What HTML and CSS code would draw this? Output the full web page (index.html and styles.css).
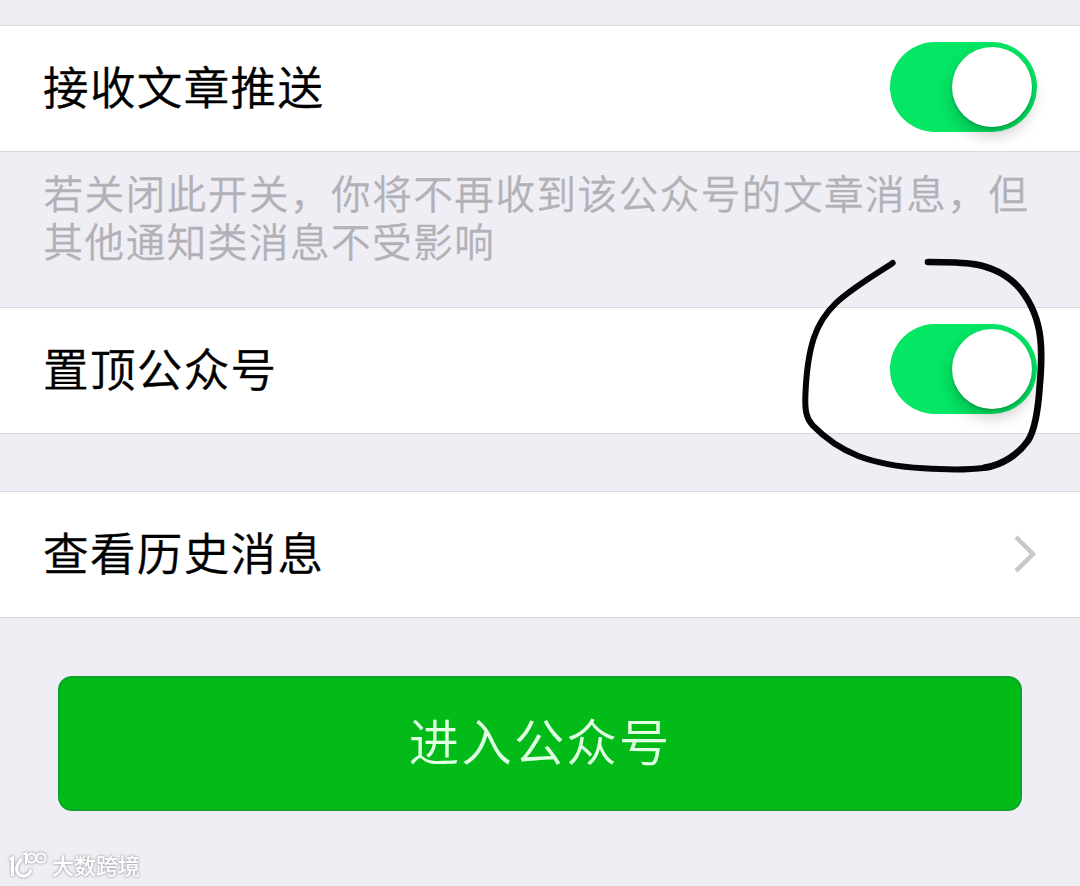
FILE: index.html
```html
<!DOCTYPE html>
<html lang="zh-CN">
<head>
    <meta charset="UTF-8">
    <meta name="viewport" content="width=device-width, initial-scale=1.0">
    <title>公众号设置</title>
    <link rel="stylesheet" href="styles.css">
</head>
<body>

<div class="settings">
    <div class="row">
        <span class="label">接收文章推送</span>
        <div class="switch"><div class="knob"></div></div>
    </div>
    <p class="hint">若关闭此开关，你将不再收到该公众号的文章消息，但其他通知类消息不受影响</p>

    <div class="row">
        <span class="label">置顶公众号</span>
        <div class="switch"><div class="knob"></div></div>
    </div>

    <div class="row row-link">
        <span class="label">查看历史消息</span>
        <svg class="arrow" width="24" height="40" viewBox="0 0 24 40">
            <path d="M3 3 L20 20 L3 37" />
        </svg>
    </div>

    <button class="enter">进入公众号</button>
</div>

<!-- Cercle dessiné à la main -->
<svg class="circle" viewBox="0 0 870 750">
    <path d="M308 69 C250 108 187 143 137 190 C108 218 84 255 71 295 C54 348 48 412 46 470 C45 510 48 535 68 556 C105 594 153 627 205 648 C265 671 330 681 400 685 C465 689 530 691 585 683" />
    <path class="thick" d="M585 683 C638 675 686 642 714 602 C738 564 745 500 749 440 C754 385 756 340 751 295 C745 240 724 190 693 150 C660 110 610 83 555 73 C510 66 460 66 414 66" />
</svg>

<div class="watermark">
    <svg width="40" height="30" viewBox="0 0 40 30">
        <path class="thick" d="M1.500 9.500 L4.500 8 V26 M13.500 8.500 C12.500 12 8.500 13.500 8.500 18.500 C8.500 28 21 28.500 23 19.500" />
        <path d="M15 4.500 L18 3 V14" />
        <circle cx="23.500" cy="8" r="4.500" />
        <circle cx="33" cy="8" r="4.500" />
    </svg>
    <span>大数跨境</span>
</div>

</body>
</html>
```
FILE: styles.css
```css
body {
    margin: 0;
    height: 886px;
    position: relative;
    overflow: hidden;
    background-color: #efeef5;
    font-family: 'Noto Sans CJK SC', sans-serif;
}

.settings {
    display: flex;
    flex-direction: column;
    padding-top: 25px;
}

.row {
    display: flex;
    align-items: center;
    justify-content: space-between;
    box-sizing: border-box;
    height: 127px;
    padding: 0 43px 0 43px;
    background-color: #fff;
    border-top: 1px solid #d9d8de;
    border-bottom: 1px solid #d9d8de;
}

.row-link {
    margin-top: 57px;
}

.label {
    margin-bottom: 7px;
    font-size: 45.5px;
    font-weight: 350;
    line-height: 60px;
    letter-spacing: 1.4px;
    color: #000;
    -webkit-text-stroke: 0.4px #000;
}

/* Interrupteur */
.switch {
    display: flex;
    align-items: center;
    justify-content: flex-end;
    box-sizing: border-box;
    width: 147px;
    height: 90px;
    padding-right: 5px;
    border-radius: 45px;
    background-color: #04e664;
    margin-bottom: 3px;
}

.knob {
    width: 80px;
    height: 80px;
    border-radius: 50%;
    background-color: #fff;
    box-shadow: 0 8px 16px rgba(0, 0, 0, 0.22), 0 2px 3px rgba(0, 0, 0, 0.15);
}

.hint {
    box-sizing: border-box;
    height: 155px;
    margin: 0;
    padding: 16px 40px 0 43.5px;
    font-size: 39.5px;
    font-weight: 350;
    line-height: 48px;
    letter-spacing: 1.58px;
    color: #b2b1b7;
    -webkit-text-stroke: 0.3px #b2b1b7;
}

.arrow {
    margin-bottom: 2px;
    fill: none;
    stroke: #c7c7cc;
    stroke-width: 4.5;
}

.enter {
    height: 135px;
    margin: 58px 58px 0;
    padding: 0 0 9px;
    border: 2px solid #0aa528;
    border-radius: 14px;
    background-color: #02bb18;
    color: #e0ffe3;
    font-family: inherit;
    font-size: 50.5px;
    font-weight: 350;
    letter-spacing: 2px;
}

.circle {
    position: absolute;
    left: 790px;
    top: 240px;
    width: 290px;
    height: 250px;
    fill: none;
    stroke: #050507;
    stroke-width: 18;
    stroke-linecap: round;
}

.circle .thick {
    stroke-width: 20;
}

/* Filigrane */
.watermark {
    position: absolute;
    left: 8px;
    top: 850px;
    display: flex;
    align-items: center;
    gap: 4px;
    color: #fff;
    font-size: 22px;
    font-weight: 500;
    line-height: 32px;
    filter: drop-shadow(0 0 1px #a9a8ae) drop-shadow(0 0 1px #c5c4ca);
}

.watermark span {
    margin-top: -2px;
}

.watermark svg {
    fill: none;
    stroke: #fff;
    stroke-width: 2;
}

.watermark .thick {
    stroke-width: 3;
}
```
